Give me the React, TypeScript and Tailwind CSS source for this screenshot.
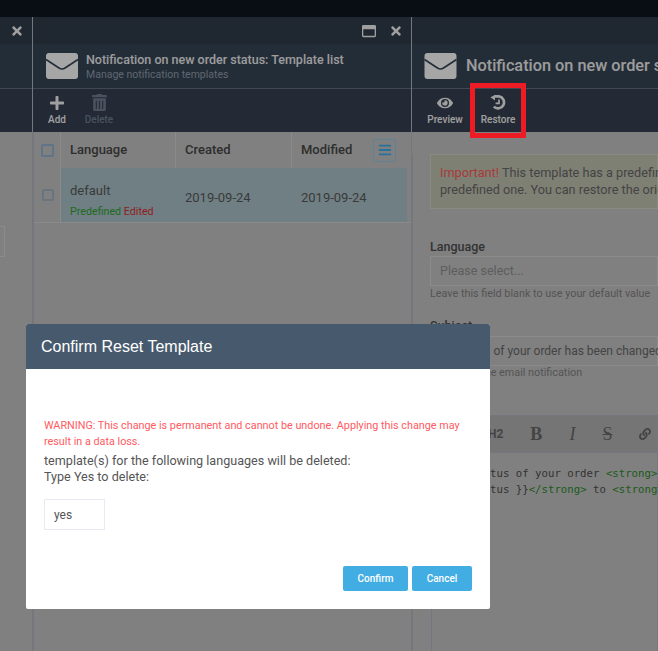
import { FaBars, FaEye, FaLink, FaPlus, FaRegWindowMaximize, FaTimes, FaTrashAlt } from "react-icons/fa";

function Envelope({ className }: { className: string }) {
  return (
    <svg className={className} viewBox="0 0 32 26" fill="none">
      <rect width="32" height="26" rx="3" fill="#ffffff" />
      <path d="M0 6.5 L13 15 Q16 17 19 15 L32 6.5" stroke="#374556" strokeWidth="1.6" />
    </svg>
  );
}

function RestoreIcon() {
  return (
    <svg className="h-[15px] w-[16px]" viewBox="0 0 16 15" fill="none" stroke="currentColor">
      <path d="M4 1.4 H9 A6 6 0 1 1 3.8 11.6" strokeWidth="2.7" />
      <path d="M5 0 V5.4 L0.4 2.2 Z" fill="currentColor" stroke="none" />
      <path d="M9 4.6 V8.4 H5.6" strokeWidth="1.7" />
    </svg>
  );
}

function ToolButton({ icon, label, dim }: { icon: React.ReactNode; label: string; dim?: boolean }) {
  return (
    <div className={`flex w-[48px] flex-col items-center ${dim ? "text-[#727e91]" : "text-[#f5f5f5]"}`}>
      <div className="flex h-[17px] items-center text-[16px]">{icon}</div>
      <div className="mt-[2px] text-[10px] leading-[14px] font-medium">{label}</div>
    </div>
  );
}

function PanelHeader({ children }: { children?: React.ReactNode }) {
  return (
    <div className="flex h-[27px] items-center justify-end gap-[13px] bg-[#303c4b] pr-[8px] text-[#f5f5f5]">{children}</div>
  );
}

function LeftPanel() {
  return (
    <div className="w-[33px] shrink-0 border-r border-[#b6b6c0]">
      <PanelHeader>
        <FaTimes className="text-[14px]" />
      </PanelHeader>
      <div className="h-[45px] border-b border-[#616f80] bg-[#374556]" />
      <div className="h-[43px] bg-[#364152]" />
      <div className="mt-[94px] h-[31px] w-[5px] border-y border-r border-[#d6d6d6]" />
    </div>
  );
}

function MiddlePanel() {
  return (
    <div className="w-[379px] shrink-0 border-r border-[#b6b6c0]">
      <PanelHeader>
        <FaRegWindowMaximize className="text-[14px]" />
        <FaTimes className="text-[14px]" />
      </PanelHeader>
      <div className="flex h-[45px] items-center gap-[8px] border-b border-[#616f80] bg-[#374556] pl-[13px]">
        <Envelope className="h-[26px] w-[32px]" />
        <div>
          <div className="text-[12.5px] leading-[17px] font-medium text-[#f0f0f0]">Notification on new order status: Template list</div>
          <div className="text-[10.5px] leading-[13px] text-[#929ead]">Manage notification templates</div>
        </div>
      </div>
      <div className="flex h-[43px] items-center bg-[#364152]">
        <ToolButton icon={<FaPlus />} label="Add" />
        <div className="-ml-[6px]">
          <ToolButton icon={<FaTrashAlt className="text-[17px]" />} label="Delete" dim />
        </div>
      </div>
      <div className="h-[519px] border-l border-[#b6b6c0]">
        <div className="flex h-[36px] items-center text-[13px] font-medium text-[#474747]">
          <div className="flex h-full w-[27px] items-center justify-center border-r border-[#d4d4d4] pl-[1px]">
            <div className="h-[13px] w-[13px] rounded-[2px] border-2 border-[#92b1d3]" />
          </div>
          <div className="flex h-full w-[115px] items-center border-r border-[#d4d4d4] pl-[9px]">Language</div>
          <div className="flex h-full w-[116px] items-center border-r border-[#d4d4d4] pl-[9px]">Created</div>
          <div className="flex h-full w-[81px] items-center pl-[9px]">Modified</div>
          <div className="flex h-[23px] w-[23px] items-center justify-center rounded-[2px] border border-[#92c8e7] text-[#3bb0f0]">
            <FaBars className="text-[14px]" />
          </div>
        </div>
        <div className="flex h-[55px] border-b border-[#d4d4d4] pl-[1px] text-[13px]">
          <div className="flex w-[26px] items-center justify-center border-r border-[#d4d4d4]">
            <div className="h-[12px] w-[12px] rounded-[2px] border-2 border-[#a0b4c4]" />
          </div>
          <div className="flex w-[346px] items-start bg-[#abc3cb] text-[#5a5a5a]">
            <div className="w-[115px] pt-[14px] pl-[9px]">
              <div className="leading-[17px]">default</div>
              <div className="mt-[6px] text-[10.7px] leading-[13px]">
                <span className="text-[#30a530]">Predefined</span> <span className="text-[#dc3131]">Edited</span>
              </div>
            </div>
            <div className="w-[116px] pt-[21px] pl-[9px] leading-[17px]">2019-09-24</div>
            <div className="pt-[21px] pl-[9px] leading-[17px]">2019-09-24</div>
          </div>
        </div>
      </div>
    </div>
  );
}

function RightPanel() {
  return (
    <div className="min-w-0 flex-1 overflow-hidden">
      <PanelHeader />
      <div className="flex h-[45px] items-center gap-[9px] border-b border-[#616f80] bg-[#374556] pl-[12px]">
        <Envelope className="h-[26px] w-[33px] shrink-0" />
        <div className="text-[16.3px] font-medium whitespace-nowrap text-[#f0f0f0]">Notification on new order status: Edit</div>
      </div>
      <div className="flex h-[43px] items-center bg-[#364152] pl-[9px]">
        <ToolButton icon={<FaEye />} label="Preview" />
        <div className="ml-[5px]">
          <ToolButton icon={<RestoreIcon />} label="Restore" />
        </div>
      </div>
      <div className="h-[519px] border-l border-[#b6b6c0] pl-[17px] whitespace-nowrap">
        <div className="mt-[22px] h-[55px] border border-[#d4d4c5] bg-[#c4c5b3] pt-[9px] pl-[9px] text-[12.7px] leading-[17px] text-[#696969]">
          <div>
            <span className="text-[#ff5a5a]">Important!</span> This template has a predefined version that differs from the
          </div>
          <div>predefined one. You can restore the original</div>
        </div>
        <div className="mt-[30px] text-[12.5px] leading-[16px] font-medium text-[#4f4f4f]">Language</div>
        <div className="mt-[1px] flex h-[30px] items-center border border-[#d6d6d6] pl-[9px] text-[12.5px] text-[#8f8f8f]">Please select...</div>
        <div className="mt-[1px] text-[10.8px] leading-[14px] text-[#828282]">Leave this field blank to use your default value</div>
        <div className="mt-[17px] text-[12.5px] leading-[16px] font-medium text-[#4f4f4f]">Subject</div>
        <div className="mt-[2px] flex h-[30px] items-center border border-[#d6d6d6] pl-[3px] text-[12px] text-[#696969]">The status of your order has been changed</div>
        <div className="text-[10.8px] leading-[14px] text-[#828282]">Subject of the email notification</div>
        <div className="mt-[35px] ml-[1px] flex h-[37px] items-center gap-[27px] border-x border-t border-[#b6b6c5] bg-[#b4b4b4] pl-[56px] font-['Liberation_Serif',serif] text-[#696969]">
          <span className="font-['Roboto',sans-serif] text-[12px] font-bold">H2</span>
          <span className="text-[18px] font-bold">B</span>
          <span className="text-[18px] italic">I</span>
          <span className="text-[18px] line-through">S</span>
          <FaLink className="text-[12px]" />
        </div>
        <div className="ml-[1px] h-[300px] border-x border-t border-[#b6b6c5] pt-[13px] pl-[13px] font-['DejaVu_Sans_Mono',monospace] text-[10.7px] leading-[16px] whitespace-pre text-[#4f4f4f]">
          <div>
            The status of your order <span className="text-[#2d8b2d]">&lt;strong&gt;</span>
          </div>
          <div>
            {" {{ status }}"}
            <span className="text-[#2d8b2d]">&lt;/strong&gt;</span> to <span className="text-[#2d8b2d]">&lt;strong&gt;</span>
          </div>
        </div>
      </div>
    </div>
  );
}

function ConfirmModal() {
  return (
    <div className="absolute top-[324px] left-[26px] flex h-[285px] w-[464px] flex-col overflow-hidden rounded-[2px] bg-white">
      <div className="flex h-[45px] items-center bg-[#475a6d] pt-[1px] pl-[15px] font-['Liberation_Sans',sans-serif] text-[16px] text-white">Confirm Reset Template</div>
      <div className="flex-1 px-[18px] pt-[49px]">
        <div className="text-[10.8px] leading-[16px] text-[#ff5a5f]">
          WARNING: This change is permanent and cannot be undone. Applying this change may result in a data loss.
        </div>
        <div className="mt-[3px] text-[12.6px] leading-[16px] text-[#555]">
          <div>template(s) for the following languages will be deleted:</div>
          <div>Type Yes to delete:</div>
        </div>
        <div className="mt-[14px] flex h-[31px] w-[61px] items-center border border-[#e8eaf2] pl-[9px] text-[12px] text-[#555]">yes</div>
        <div className="mt-[36px] flex justify-end gap-[4px]">
          <button className="h-[25px] w-[65px] rounded-[2px] bg-[#42ade2] text-[10px] font-medium text-white">Confirm</button>
          <button className="h-[25px] w-[60px] rounded-[2px] bg-[#42ade2] text-[10px] font-medium text-white">Cancel</button>
        </div>
      </div>
    </div>
  );
}

export default function App() {
  return (
    <div className="relative h-[651px] w-[658px] overflow-hidden bg-[#c5c5c5] font-['Roboto',sans-serif]">
      <div className="h-[17px] bg-[#0f1420]" />
      <div className="flex h-[634px]">
        <LeftPanel />
        <MiddlePanel />
        <RightPanel />
      </div>

      {/* 遮罩层 */}
      <div className="absolute inset-0 bg-black/35" />

      {/* annotation */}
      <div className="absolute top-[83px] left-[470px] h-[55px] w-[56px] border-[5px] border-[#ed1c24]" />

      <ConfirmModal />
    </div>
  );
}
